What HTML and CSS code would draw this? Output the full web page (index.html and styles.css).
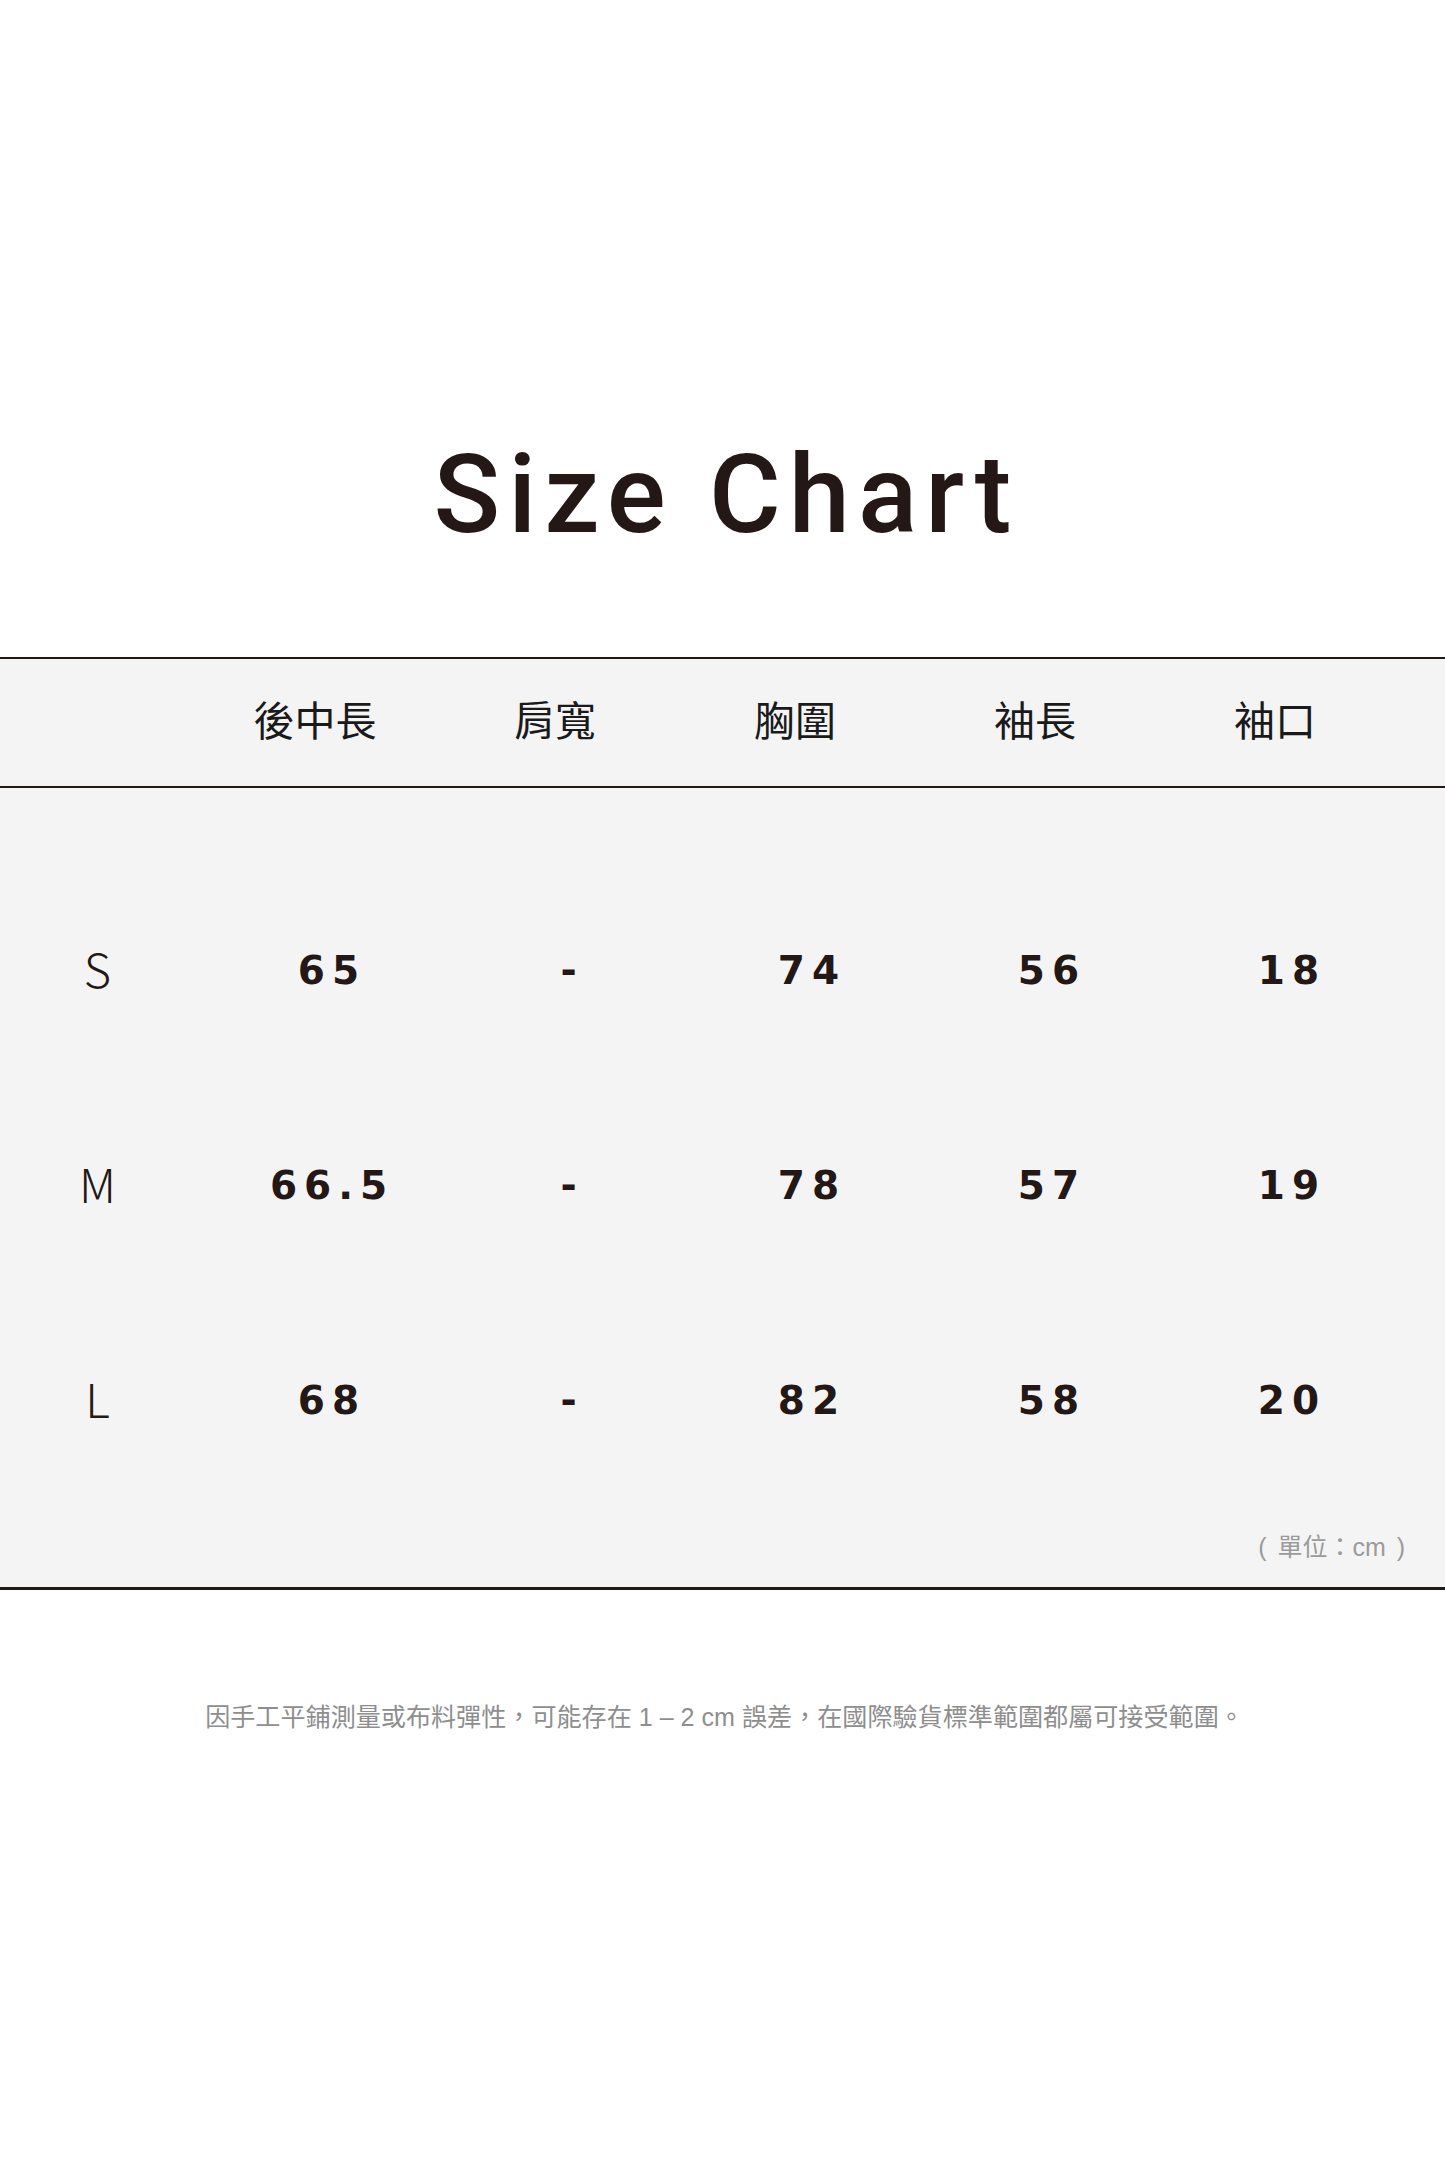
FILE: index.html
```html
<!DOCTYPE html>
<html lang="zh-Hant">
<head>
<meta charset="utf-8">
<title>Size Chart</title>
<link rel="stylesheet" href="styles.css">
</head>
<body>
<main class="page">
  <h1 class="title">Size Chart</h1>
  <section class="chart">
    <div class="head-row">
      <div class="cell label"></div>
      <div class="cell head">後中長</div>
      <div class="cell head">肩寬</div>
      <div class="cell head">胸圍</div>
      <div class="cell head">袖長</div>
      <div class="cell head">袖口</div>
    </div>
    <div class="body">
      <div class="row">
        <div class="cell label">S</div>
        <div class="cell num">65</div>
        <div class="cell num">-</div>
        <div class="cell num">74</div>
        <div class="cell num">56</div>
        <div class="cell num">18</div>
      </div>
      <div class="row">
        <div class="cell label">M</div>
        <div class="cell num">66.5</div>
        <div class="cell num">-</div>
        <div class="cell num">78</div>
        <div class="cell num">57</div>
        <div class="cell num">19</div>
      </div>
      <div class="row">
        <div class="cell label">L</div>
        <div class="cell num">68</div>
        <div class="cell num">-</div>
        <div class="cell num">82</div>
        <div class="cell num">58</div>
        <div class="cell num">20</div>
      </div>
      <p class="unit">( 單位：cm )</p>
    </div>
  </section>
  <p class="note">因手工平鋪測量或布料彈性，可能存在 1 – 2 cm 誤差，在國際驗貨標準範圍都屬可接受範圍。</p>
</main>
</body>
</html>
```

FILE: styles.css
```css
html, body {
  margin: 0;
  padding: 0;
  background: #ffffff;
}

.page {
  width: 1445px;
  min-height: 2168px;
  display: flex;
  flex-direction: column;
  color: #231815;
}

.title {
  margin: 440px 0 0 0;
  font-family: Roboto, "Liberation Sans", sans-serif;
  font-weight: 500;
  font-size: 110px;
  line-height: 110px;
  letter-spacing: 8px;
  text-indent: 8px;
  text-align: center;
  color: #231815;
}

.chart {
  margin-top: 107px;
  border-top: 2px solid #231815;
  border-bottom: 3px solid #231815;
  background: #f4f4f4;
}

.head-row,
.row {
  display: grid;
  grid-template-columns: 195px repeat(5, 240px) 1fr;
  align-items: center;
}

.head-row {
  height: 127px;
  border-bottom: 2px solid #231815;
}

.body {
  padding-top: 72px;
  display: flex;
  flex-direction: column;
}

.row {
  height: 215px;
}

.cell {
  text-align: center;
}

.head {
  font-family: "Noto Sans CJK TC", sans-serif;
  font-size: 41px;
  font-weight: 400;
  color: #1a1a1a;
  line-height: 1;
  padding-bottom: 8px;
}

.label {
  font-family: "Noto Sans CJK TC", "Liberation Sans", sans-serif;
  font-weight: 200;
  font-size: 47px;
  line-height: 1;
  color: #231815;
}

.num {
  font-family: "DejaVu Sans", sans-serif;
  font-weight: 700;
  font-size: 39px;
  letter-spacing: 7px;
  line-height: 1;
  padding-left: 34px;
  padding-top: 6px;
  color: #231815;
}

.unit {
  margin: 30px 40px 27px 0;
  text-align: right;
  font-family: "Liberation Sans", "Noto Sans CJK TC", sans-serif;
  font-size: 25px;
  line-height: 1;
  word-spacing: 4px;
  color: #9b9b9b;
}

.note {
  margin: 115px 0 0 0;
  padding-left: 4px;
  text-align: center;
  font-family: "Liberation Sans", "Noto Sans CJK TC", sans-serif;
  font-size: 25.1px;
  line-height: 1;
  color: #8e8e8e;
}
```
